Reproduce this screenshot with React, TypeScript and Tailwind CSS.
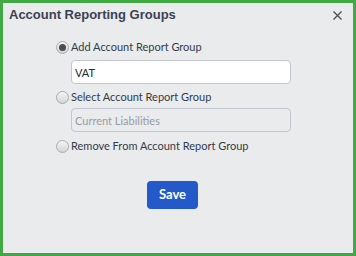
import { useState } from "react";

const Radio = ({ checked, label, onClick }: { checked: boolean; label: string; onClick: () => void }) => {
  return (
    <label onClick={onClick} className="flex items-center h-[16px] gap-[2px] cursor-pointer">
      <span className="w-[13px] h-[13px] rounded-full border border-[#a9abb0] bg-gradient-to-b from-[#f6f6f6] to-[#d4d5d8] flex items-center justify-center">
        {checked && <span className="w-[7px] h-[7px] rounded-full bg-[#4a4d52]" />}
      </span>
      <span className="text-[11px] text-[#333b48] leading-[16px]">{label}</span>
    </label>
  );
};

const App = () => {
  const [mode, setMode] = useState("add");

  return (
    <div
      className="w-[356px] h-[256px] border-[3px] border-[#40a944] bg-[#eaebed] flex flex-col"
      style={{ fontFamily: "Lato, 'Liberation Sans', sans-serif" }}
    >
      <div className="flex items-center justify-between pl-[6px] pr-[11px] pt-[4px]">
        <h1
          className="text-[13px] font-bold text-[#3a4252] leading-[16px]"
          style={{ fontFamily: "'Liberation Sans', Arial, sans-serif" }}
        >
          Account Reporting Groups
        </h1>
        <button className="text-[#4a4d52]">
          <svg width="9" height="9" viewBox="0 0 9 9" stroke="currentColor" strokeWidth="1.3" className="block">
            <path d="M0.5 0.5 L8.5 8.5 M8.5 0.5 L0.5 8.5" />
          </svg>
        </button>
      </div>

      <div className="flex flex-col pl-[53px] mt-[16px]">
        <Radio checked={mode === "add"} label="Add Account Report Group" onClick={() => setMode("add")} />
        <input
          type="text"
          defaultValue="VAT"
          className="mt-[5px] ml-[15px] w-[220px] h-[24px] bg-white border border-[#c3c5d0] rounded-[4px] px-[3px] text-[11px] text-[#222831] outline-none"
        />
        <div className="mt-[5px]">
          <Radio checked={mode === "select"} label="Select Account Report Group" onClick={() => setMode("select")} />
        </div>
        <input
          type="text"
          disabled
          defaultValue="Current Liabilities"
          className="mt-[3px] ml-[15px] w-[220px] h-[24px] bg-[#eaebed] border border-[#c3c5d0] rounded-[4px] px-[3px] text-[11px] text-[#9a9ca3] outline-none"
        />
        <div className="mt-[6px]">
          <Radio checked={mode === "remove"} label="Remove From Account Report Group" onClick={() => setMode("remove")} />
        </div>
      </div>

      <div className="flex justify-center mt-[27px] pr-[11px]">
        <button className="w-[51px] h-[28px] bg-[#2459c9] rounded-[4px] text-white font-bold text-[13px]">
          Save
        </button>
      </div>
    </div>
  );
};

export default App;
